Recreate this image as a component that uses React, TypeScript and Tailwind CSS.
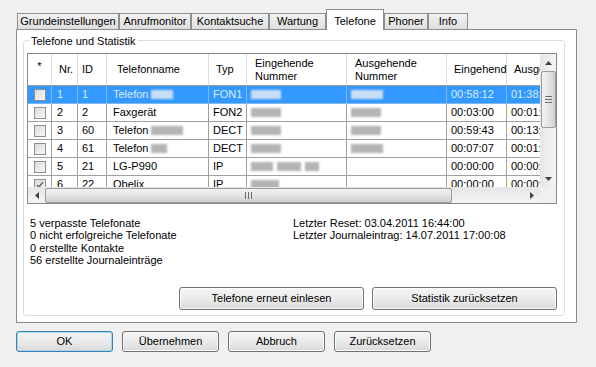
import React from 'react';

type Row = {
  sel?: boolean;
  checked?: boolean;
  nr: string;
  id: string;
  name: string;
  nameBlur?: number;
  typ: string;
  inBlur?: number[];
  outBlur?: number[];
  ein: string;
  aus: string;
};

const rows: Row[] = [
  { sel: true, nr: '1', id: '1', name: 'Telefon', nameBlur: 22, typ: 'FON1', inBlur: [30], outBlur: [32], ein: '00:58:12', aus: '01:38:12' },
  { nr: '2', id: '2', name: 'Faxgerät', typ: 'FON2', inBlur: [30], outBlur: [30], ein: '00:03:00', aus: '00:01:10' },
  { nr: '3', id: '60', name: 'Telefon', nameBlur: 32, typ: 'DECT', inBlur: [30], outBlur: [30], ein: '00:59:43', aus: '00:13:20' },
  { nr: '4', id: '61', name: 'Telefon', nameBlur: 16, typ: 'DECT', inBlur: [30], outBlur: [32], ein: '00:07:07', aus: '00:01:05' },
  { nr: '5', id: '21', name: 'LG-P990', typ: 'IP', inBlur: [22, 24, 14], ein: '00:00:00', aus: '00:00:00' },
  { checked: true, nr: '6', id: '22', name: 'Obelix', typ: 'IP', inBlur: [28], ein: '00:00:00', aus: '00:00:00' },
];

const tabs = [
  { label: 'Grundeinstellungen', w: 'w-[102px]' },
  { label: 'Anrufmonitor', w: 'w-[72px]' },
  { label: 'Kontaktsuche', w: 'w-[78px]' },
  { label: 'Wartung', w: 'w-[57px]' },
  { label: 'Telefone', w: 'w-[58px]', active: true },
  { label: 'Phoner', w: 'w-[44px]' },
  { label: 'Info', w: 'w-[40px]' },
];

const cols = 'grid grid-cols-[24px_26px_29px_102px_38px_100px_100px_60px_60px]';

const Blob = ({ widths, sel }: { widths: number[]; sel?: boolean }) => (
  <span className="inline-flex items-center gap-[4px]">
    {widths.map((w, i) => (
      <span
        key={i}
        className={`inline-block h-[9px] blur-[1px] ${sel ? 'bg-[#c9def7]' : 'bg-[#b4b4b4]'}`}
        style={{ width: w }}
      />
    ))}
  </span>
);

const Check = ({ checked }: { checked?: boolean }) => (
  <span className="inline-flex h-[12px] w-[12px] items-center justify-center border border-[#8f8f8f] bg-gradient-to-br from-[#dcdcdc] to-[#f7f7f7]">
    {checked && (
      <svg width="8" height="8" viewBox="0 0 8 8">
        <path d="M1 4 L3 6 L7 1" stroke="#6b6b6b" strokeWidth="1.6" fill="none" />
      </svg>
    )}
  </span>
);

const Btn = ({ label, w, h, def }: { label: string; w: string; h: string; def?: boolean }) => (
  <button
    className={`${w} ${h} rounded-[3px] border text-[11px] text-black bg-gradient-to-b from-[#f4f4f4] via-[#ebebeb] to-[#d9d9d9] ${
      def ? 'border-[#3c7fb1] shadow-[inset_0_0_0_1px_#a8d8f0]' : 'border-[#707070] shadow-[inset_0_0_0_1px_#fbfbfb]'
    }`}
  >
    {label}
  </button>
);

const Arrow = ({ dir }: { dir: 'up' | 'down' | 'left' | 'right' }) => {
  const d = {
    up: 'M0 4 L3.5 0 L7 4 Z',
    down: 'M0 0 L7 0 L3.5 4 Z',
    left: 'M4 0 L4 7 L0 3.5 Z',
    right: 'M0 0 L4 3.5 L0 7 Z',
  }[dir];
  const vert = dir === 'up' || dir === 'down';
  return (
    <svg width={vert ? 7 : 4} height={vert ? 4 : 7} viewBox={vert ? '0 0 7 4' : '0 0 4 7'}>
      <path d={d} fill="#404040" />
    </svg>
  );
};

const Grid = () => (
  <div className="grid h-[151px] w-[530px] grid-cols-[512px_16px] grid-rows-[133px_16px] border border-[#828790] bg-white">
    <div className="overflow-hidden">
      <div className={`${cols} h-[32px] w-[539px] border-b border-[#a0a0a0] bg-white`}>
        <div className="flex items-center justify-center border-r border-[#dcdcdc] pb-[6px] text-[11px]">*</div>
        <div className="flex items-center border-r border-[#dcdcdc] pl-[7px]">Nr.</div>
        <div className="flex items-center border-r border-[#dcdcdc] pl-[4px]">ID</div>
        <div className="flex items-center border-r border-[#dcdcdc] pl-[10px]">Telefonname</div>
        <div className="flex items-center border-r border-[#dcdcdc] pl-[7px]">Typ</div>
        <div className="flex items-center border-r border-[#dcdcdc] pl-[8px] leading-[13px]">Eingehende<br />Nummer</div>
        <div className="flex items-center border-r border-[#dcdcdc] pl-[8px] leading-[13px]">Ausgehende<br />Nummer</div>
        <div className="flex items-center border-r border-[#dcdcdc] pl-[7px]">Eingehend</div>
        <div className="flex items-center pl-[7px]">Ausgehend</div>
      </div>
      {rows.map((r) => {
        const line = r.sel ? 'border-[#7fb9ee]' : 'border-[#a0a0a0]';
        const cell = `flex items-center border-r ${line} pl-[4px]`;
        return (
          <div
            key={r.nr}
            className={`${cols} h-[18px] w-[539px] border-b ${line} ${r.sel ? 'bg-[#3399ff] text-[#dcecff]' : 'bg-white text-black'}`}
          >
            <div className={`flex items-center justify-center border-r ${line} pl-px`}>
              <Check checked={r.checked} />
            </div>
            <div className={`${cell} pl-[5px]`}>{r.nr}</div>
            <div className={cell}>{r.id}</div>
            <div className={`${cell} gap-[3px] pl-[6px]`}>
              {r.name}
              {r.nameBlur && <Blob widths={[r.nameBlur]} sel={r.sel} />}
            </div>
            <div className={cell}>{r.typ}</div>
            <div className={cell}>{r.inBlur && <Blob widths={r.inBlur} sel={r.sel} />}</div>
            <div className={cell}>{r.outBlur && <Blob widths={r.outBlur} sel={r.sel} />}</div>
            <div className={cell}>{r.ein}</div>
            <div className="flex items-center pl-[4px]">{r.aus}</div>
          </div>
        );
      })}
    </div>

    {/* vertical scrollbar */}
    <div className="flex flex-col items-center bg-gradient-to-r from-[#e6e6e6] to-[#f4f4f4]">
      <div className="flex h-[17px] items-center justify-center">
        <Arrow dir="up" />
      </div>
      <div className="flex h-[57px] w-[15px] items-center justify-center rounded-[2px] border border-[#9b9b9b] bg-gradient-to-r from-[#f2f2f2] via-[#e4e4e4] to-[#cfcfcf]">
        <div className="flex flex-col gap-[2px]">
          <span className="h-px w-[7px] bg-[#6e6e6e]" />
          <span className="h-px w-[7px] bg-[#6e6e6e]" />
          <span className="h-px w-[7px] bg-[#6e6e6e]" />
        </div>
      </div>
      <div className="flex-1" />
      <div className="flex h-[17px] items-center justify-center">
        <Arrow dir="down" />
      </div>
    </div>

    {/* horizontal scrollbar */}
    <div className="flex items-center bg-gradient-to-b from-[#e6e6e6] to-[#f4f4f4]">
      <div className="flex w-[17px] items-center justify-center">
        <Arrow dir="left" />
      </div>
      <div className="flex h-[15px] w-[407px] items-center justify-center rounded-[2px] border border-[#9b9b9b] bg-gradient-to-b from-[#f2f2f2] via-[#e4e4e4] to-[#cfcfcf]">
        <div className="flex gap-[2px]">
          <span className="h-[7px] w-px bg-[#6e6e6e]" />
          <span className="h-[7px] w-px bg-[#6e6e6e]" />
          <span className="h-[7px] w-px bg-[#6e6e6e]" />
        </div>
      </div>
      <div className="flex-1" />
      <div className="flex w-[17px] items-center justify-center">
        <Arrow dir="right" />
      </div>
    </div>
    <div className="bg-[#f0f0f0]" />
  </div>
);

export default function App() {
  return (
    <div className="h-[367px] w-[596px] overflow-hidden bg-[#f0f0f0] pt-[9px] font-['Liberation_Sans',Arial,sans-serif] text-[11px] text-black">
      {/* tab strip */}
      <div className="relative z-10 ml-[17px] flex h-[21px] items-end">
        {tabs.map((t) =>
          t.active ? (
            <div
              key={t.label}
              className={`${t.w} flex h-[21px] items-start justify-center border-x border-t border-[#898c95] bg-white pt-[3px]`}
            >
              {t.label}
            </div>
          ) : (
            <div
              key={t.label}
              className={`${t.w} mb-px flex h-[16px] items-center justify-center border-x border-t border-[#8e8f8f] bg-gradient-to-b from-[#f2f2f2] to-[#dedede]`}
            >
              {t.label}
            </div>
          )
        )}
      </div>

      {/* tab page */}
      <div className="-mt-px ml-[16px] h-[294px] w-[561px] border border-[#898c95] bg-white pl-[6px] pt-[10px]">
        <div className="relative flex h-[276px] w-[542px] flex-col rounded-[3px] border border-[#d5dfe5] pl-[3px] pr-[6px] pt-[12px] pb-[5px]">
          <span className="absolute -top-[8px] left-[5px] bg-white px-[2px]">Telefone und Statistik</span>
          <Grid />

          <div className="mt-[13px] flex pl-[3px] leading-[12.4px]">
            <div className="w-[263px]">
              <div>5 verpasste Telefonate</div>
              <div>0 nicht erfolgreiche Telefonate</div>
              <div>0 erstellte Kontakte</div>
              <div>56 erstellte Journaleinträge</div>
            </div>
            <div>
              <div>Letzter Reset: 03.04.2011 16:44:00</div>
              <div>Letzter Journaleintrag: 14.07.2011 17:00:08</div>
            </div>
          </div>

          <div className="flex-1" />
          <div className="flex justify-end gap-[8px] pr-[1px]">
            <Btn label="Telefone erneut einlesen" w="w-[185px]" h="h-[23px]" />
            <Btn label="Statistik zurücksetzen" w="w-[185px]" h="h-[23px]" />
          </div>
        </div>
      </div>

      {/* dialog buttons */}
      <div className="ml-[16px] mt-[8px] flex gap-[9px]">
        <Btn label="OK" w="w-[97px]" h="h-[21px]" def />
        <Btn label="Übernehmen" w="w-[97px]" h="h-[21px]" />
        <Btn label="Abbruch" w="w-[97px]" h="h-[21px]" />
        <Btn label="Zurücksetzen" w="w-[97px]" h="h-[21px]" />
      </div>
    </div>
  );
}
